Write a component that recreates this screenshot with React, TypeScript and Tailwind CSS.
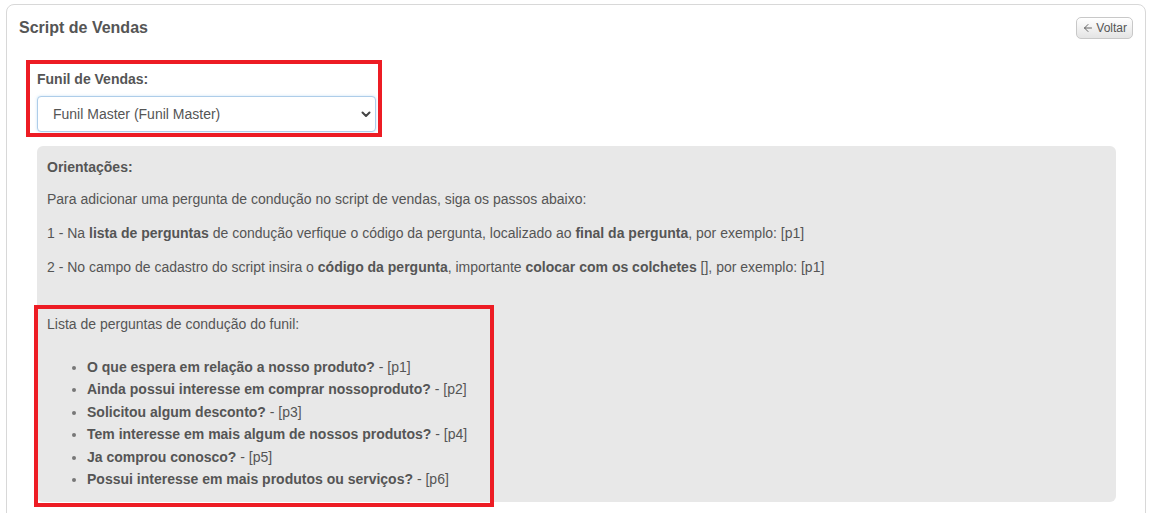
import { ArrowLeft } from 'lucide-react';

const perguntas = [
  { texto: 'O que espera em relação a nosso produto?', codigo: 'p1' },
  { texto: 'Ainda possui interesse em comprar nossoproduto?', codigo: 'p2' },
  { texto: 'Solicitou algum desconto?', codigo: 'p3' },
  { texto: 'Tem interesse em mais algum de nossos produtos?', codigo: 'p4' },
  { texto: 'Ja comprou conosco?', codigo: 'p5' },
  { texto: 'Possui interesse em mais produtos ou serviços?', codigo: 'p6' },
];

export default function App() {
  return (
    <div className="relative h-[513px] overflow-hidden bg-white font-['Liberation_Sans',Arial,sans-serif] text-[14px] text-[#555]">
      <div className="ml-[6px] mt-[4px] w-[1140px] rounded-[8px] border border-[#d8d8d8] px-[12px] pt-[12px] pb-[20px]">
        {/* Header */}
        <div className="flex items-start justify-between">
          <h1 className="text-[16px] font-bold leading-[22px] text-[#555]">Script de Vendas</h1>
          <button className="flex h-[22px] items-center gap-[2px] rounded-[5px] border border-[#c8c8c8] bg-gradient-to-b from-white to-[#e4e4e4] px-[5px] text-[12px] text-[#555] shadow-[inset_0_1px_0_#fff]">
            <ArrowLeft size={12} strokeWidth={1.8} />
            Voltar
          </button>
        </div>

        <div className="pl-[18px] pr-[17px]">
          {/* Funil */}
          <div className="mt-[30px] w-[339px]">
            <label className="block text-[14px] font-bold leading-[20px] text-[#555]">Funil de Vendas:</label>
            <div className="relative mt-[7px]">
              <select className="block h-[36px] w-full appearance-none rounded-[4px] border border-[#aecde9] bg-white pl-[15px] text-[14px] text-[#555] shadow-[0_0_3px_rgba(102,175,233,0.35)] outline-none">
                <option>Funil Master (Funil Master)</option>
              </select>
              <svg className="pointer-events-none absolute right-[5px] top-[15px]" width="10" height="7" viewBox="0 0 10 7" fill="none">
                <path d="M1.5 1.5L5 5L8.5 1.5" stroke="#444" strokeWidth="2" strokeLinecap="round" strokeLinejoin="round" />
              </svg>
            </div>
          </div>

          {/* Orientações */}
          <div className="mt-[14px] rounded-[6px] bg-[#e8e8e8] px-[10px] pt-[11px] pb-[12px] leading-[20px]">
            <p className="font-bold">Orientações:</p>
            <p className="mt-[12px]">Para adicionar uma pergunta de condução no script de vendas, siga os passos abaixo:</p>
            <p className="mt-[14px]">
              1 - Na <b>lista de perguntas</b> de condução verfique o código da pergunta, localizado ao <b>final da pergunta</b>, por exemplo: [p1]
            </p>
            <p className="mt-[14px]">
              2 - No campo de cadastro do script insira o <b>código da pergunta</b>, importante <b>colocar com os colchetes</b> [], por exemplo: [p1]
            </p>
            <p className="mt-[37px]">Lista de perguntas de condução do funil:</p>
            <ul className="mt-[22px] list-disc pl-[40px] leading-[22.4px] marker:text-[#777]">
              {perguntas.map((p) => (
                <li key={p.codigo}>
                  <b>{p.texto}</b> - [{p.codigo}]
                </li>
              ))}
            </ul>
          </div>
        </div>
      </div>

      {/* Highlight frames */}
      <div className="pointer-events-none absolute left-[26px] top-[60px] h-[77px] w-[356px] border-[4px] border-[#ed1c24]" />
      <div className="pointer-events-none absolute left-[34px] top-[305px] h-[202px] w-[460px] border-[4px] border-[#ed1c24]" />
    </div>
  );
}
